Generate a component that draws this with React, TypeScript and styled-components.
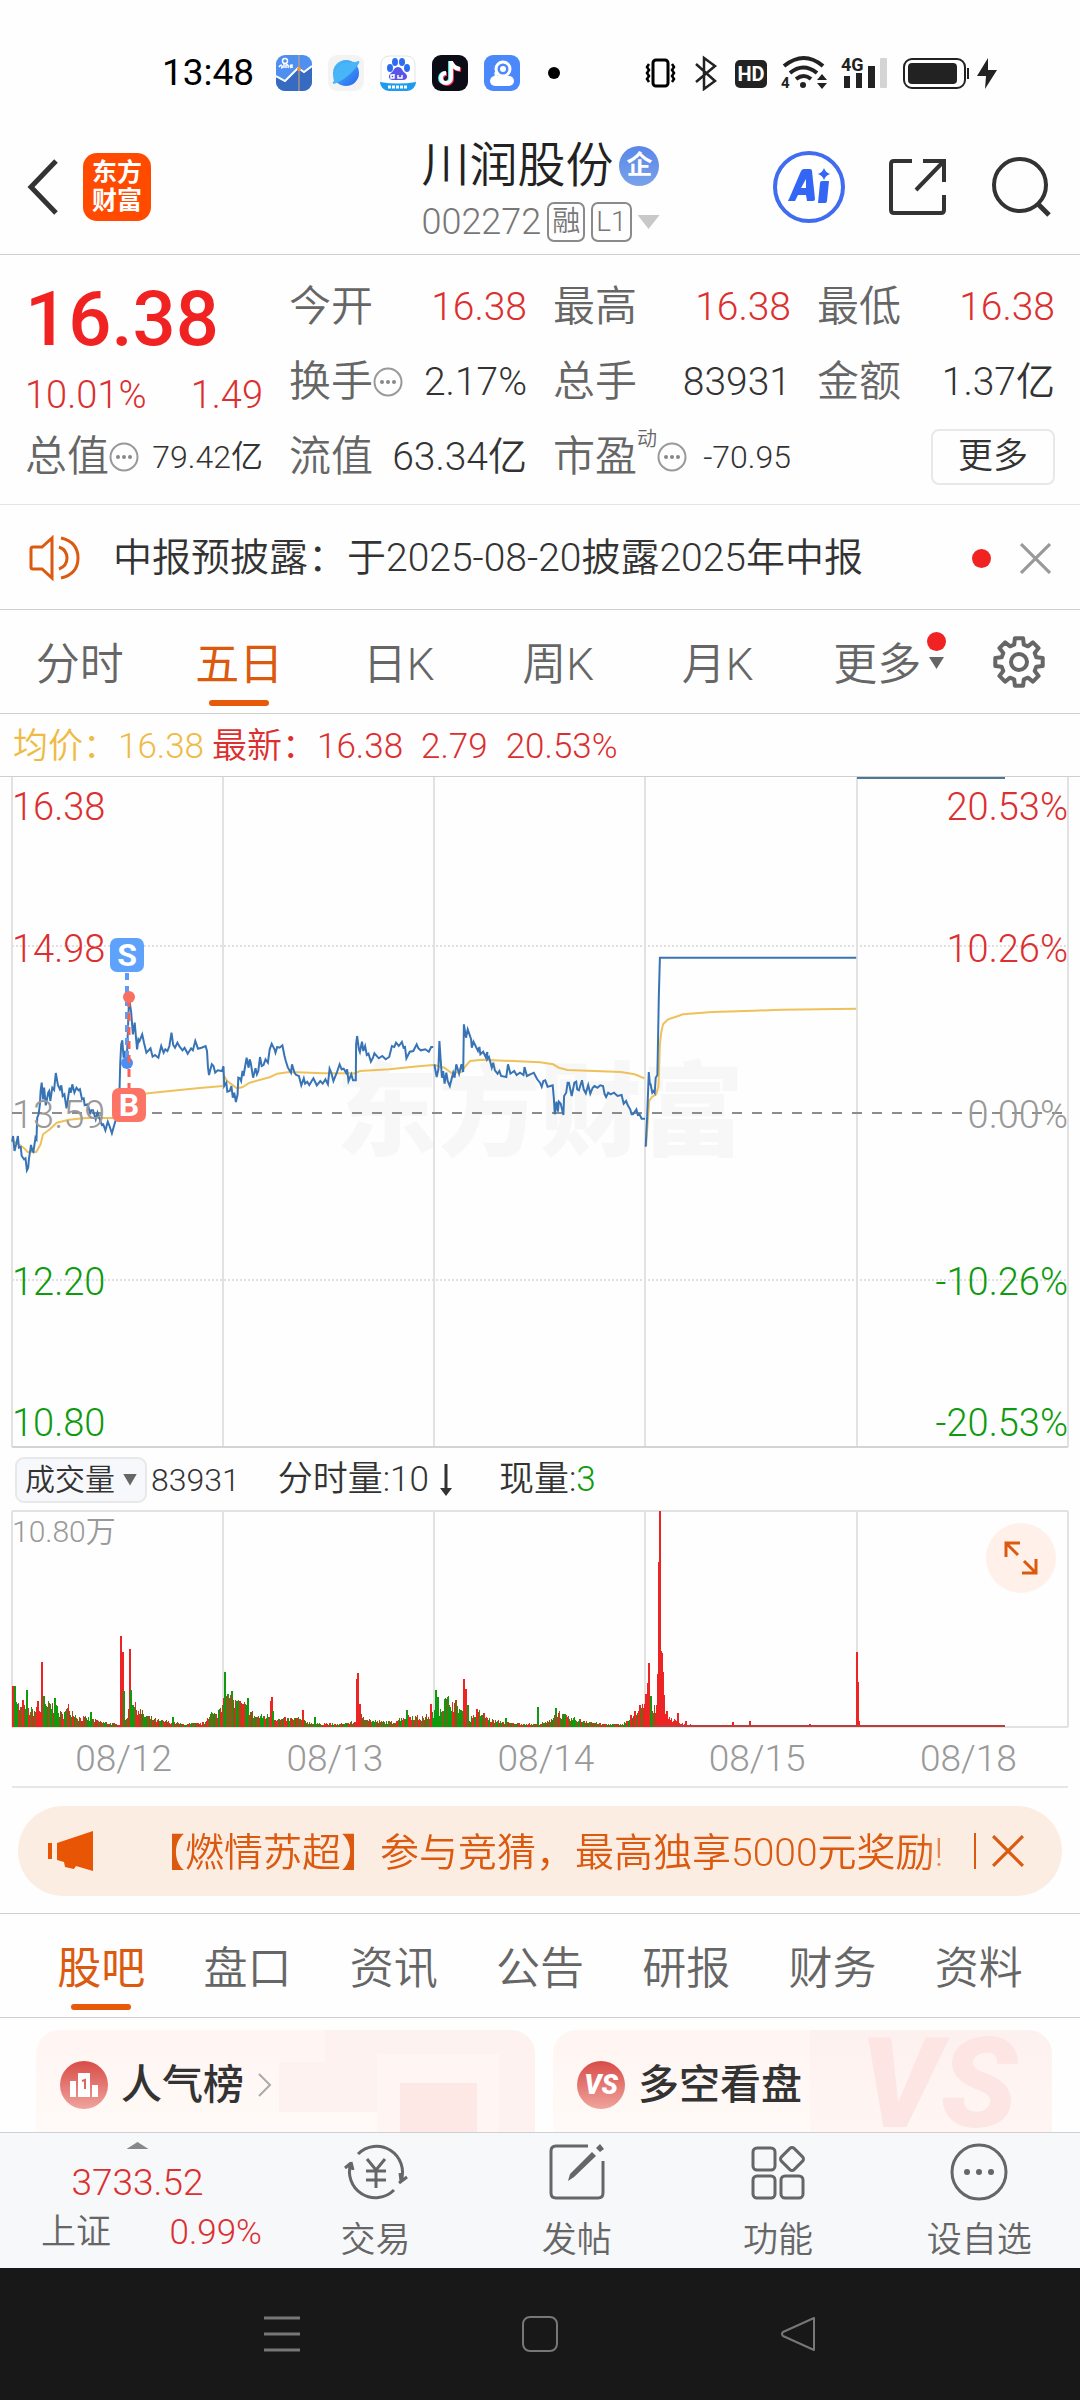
import React from "react";
import styled, { createGlobalStyle, css } from "styled-components";

const RED = "#dc2f2f";
const GREEN = "#0f9a0f";
const ORANGE = "#dc5a10";
const DARK = "#333333";
const GREY = "#666666";
const LIGHT = "#999999";
const LINE = "#cfcfcf";

const GlobalStyle = createGlobalStyle`
  * { box-sizing: border-box; }
  body {
    margin: 0;
    background: #fefefe;
    color: ${DARK};
    font-family: Roboto, "Noto Sans CJK SC", sans-serif;
    font-weight: 350;
    -webkit-font-smoothing: antialiased;
  }
  button, select {
    font-family: inherit;
    font-weight: inherit;
    color: inherit;
    background: none;
    border: 0;
    margin: 0;
    padding: 0;
    cursor: pointer;
  }
  svg { display: block; flex: none; }
`;

const Screen = styled.div`
  display: flex;
  flex-direction: column;
  height: 100vh;
  min-height: 2400px;
  overflow: hidden;
`;

/* ---------- status bar ---------- */

const StatusBar = styled.div`
  display: flex;
  align-items: center;
  justify-content: space-between;
  height: 118px;
  padding: 28px 82px 0 162px;
`;

const StatusGroup = styled.div<{ $gap: number }>`
  display: flex;
  align-items: center;
  gap: ${(p) => p.$gap}px;
`;

const Clock = styled.time`
  font-size: 37px;
  line-height: 44px;
  font-weight: 450;
  color: #000;
  margin-right: 6px;
`;

/* ---------- header ---------- */

const Header = styled.header`
  display: flex;
  align-items: center;
  justify-content: space-between;
  height: 137px;
  padding: 2px 29px 0 26px;
  border-bottom: 1px solid ${LINE};
`;

const HeaderSide = styled.div<{ $gap: number; $end?: boolean }>`
  display: flex;
  flex: 1;
  align-items: center;
  gap: ${(p) => p.$gap}px;
  justify-content: ${(p) => (p.$end ? "flex-end" : "flex-start")};
`;

const BrandLogo = styled.a`
  display: grid;
  place-content: center;
  width: 68px;
  height: 68px;
  border-radius: 14px;
  background: #ff4a00;
  color: #fff;
  font-size: 25px;
  line-height: 28px;
  font-weight: 700;
  text-align: center;
  text-decoration: none;
`;

const TitleBlock = styled.div`
  display: flex;
  flex-direction: column;
  padding: 6px 0 0 4px;
`;

const TitleRow = styled.div<{ $gap: number }>`
  display: flex;
  align-items: center;
  gap: ${(p) => p.$gap}px;
`;

const StockName = styled.h1`
  margin: 0;
  font-size: 48px;
  line-height: 64px;
  font-weight: 350;
  color: #222;
`;

const CompanyBadge = styled.span`
  width: 40px;
  height: 40px;
  border-radius: 50%;
  background: linear-gradient(#5a86e8, #79a2ea);
  color: #fff;
  font-size: 26px;
  line-height: 38px;
  font-weight: 700;
  text-align: center;
`;

const StockCode = styled.span`
  font-size: 36px;
  line-height: 48px;
  color: #777;
`;

const Tag = styled.span`
  min-width: 34px;
  height: 40px;
  padding: 0 3px;
  border: 2px solid #8a8a8a;
  border-radius: 7px;
  color: #777;
  font-size: 28px;
  line-height: 36px;
  text-align: center;
`;

const Triangle = styled.span<{ $w: number; $h: number; $color: string; $up?: boolean }>`
  flex: none;
  width: ${(p) => p.$w}px;
  height: ${(p) => p.$h}px;
  background: ${(p) => p.$color};
  clip-path: ${(p) => (p.$up ? "polygon(50% 0, 100% 100%, 0 100%)" : "polygon(0 0, 100% 0, 50% 100%)")};
`;

/* ---------- quote ---------- */

const Quote = styled.section`
  display: grid;
  grid-template-columns: repeat(4, minmax(0, 1fr));
  grid-template-rows: repeat(3, 75px);
  column-gap: 26px;
  height: 250px;
  padding: 14px 25px 0;
  border-bottom: 1px solid #e4e4e4;
`;

const PriceCell = styled.div`
  grid-row: span 2;
  display: flex;
  flex-direction: column;
  justify-content: space-between;
  padding: 6px 0 2px;
`;

const BigPrice = styled.strong`
  font-size: 76px;
  line-height: 88px;
  font-weight: 500;
  color: #f02222;
`;

const ChangeRow = styled.div`
  display: flex;
  justify-content: space-between;
  font-size: 38px;
  line-height: 44px;
  color: ${RED};
`;

const Stat = styled.div`
  display: flex;
  align-items: center;
  justify-content: space-between;
  white-space: nowrap;
`;

const StatLabel = styled.span`
  display: flex;
  align-items: center;
  font-size: 42px;
  line-height: 60px;
  color: ${GREY};
`;

const Super = styled.sup`
  align-self: flex-start;
  font-size: 20px;
  line-height: 24px;
`;

const StatValue = styled.span<{ $color?: string; $small?: boolean }>`
  font-size: ${(p) => (p.$small ? 32 : 39)}px;
  line-height: 60px;
  color: ${(p) => p.$color || DARK};
`;

const MoreButton = styled.button`
  align-self: center;
  justify-self: end;
  width: 124px;
  height: 56px;
  border: 2px solid #e6e9ea;
  border-radius: 8px;
  font-size: 35px;
  line-height: 48px;
`;

/* ---------- notice ---------- */

const Notice = styled.section`
  display: flex;
  align-items: center;
  height: 105px;
  padding: 2px 29px 0;
  border-bottom: 1px solid ${LINE};
`;

const NoticeText = styled.a`
  flex: 1;
  margin-left: 33px;
  font-size: 39px;
  line-height: 56px;
  color: ${DARK};
  text-decoration: none;
  white-space: nowrap;
`;

const Dot = styled.i`
  width: 19px;
  height: 19px;
  border-radius: 50%;
  background: #f02222;
`;

const IconButton = styled.button<{ $left?: number }>`
  display: grid;
  place-items: center;
  margin-left: ${(p) => p.$left || 0}px;
`;

/* ---------- tabs ---------- */

const TabBar = styled.nav<{ $pad: number }>`
  display: flex;
  height: 104px;
  padding: 0 ${(p) => p.$pad}px;
  border-bottom: 1px solid ${LINE};
`;

const Tab = styled.button<{ $active?: boolean }>`
  position: relative;
  flex: 1;
  padding-top: 6px;
  font-size: 44px;
  line-height: 60px;
  color: ${(p) => (p.$active ? ORANGE : GREY)};
  font-weight: ${(p) => (p.$active ? 400 : 350)};
  ${(p) =>
    p.$active &&
    css`
      &::after {
        content: "";
        position: absolute;
        bottom: 7px;
        left: calc(50% - 30px);
        width: 60px;
        height: 6px;
        border-radius: 3px;
        background: #e65a0a;
      }
    `}
`;

const TabDot = styled(Dot)`
  position: absolute;
  top: 22px;
  right: 11px;
`;

const TabTriangle = styled(Triangle)`
  position: absolute;
  top: 47px;
  right: 13px;
`;

const Settings = styled.button`
  display: grid;
  place-items: center;
  width: 123px;
`;

/* ---------- charts ---------- */

const Legend = styled.div`
  display: flex;
  align-items: center;
  height: 63px;
  padding: 4px 13px 0;
  gap: 18px;
  font-size: 35px;
  line-height: 48px;
  color: ${RED};
  border-bottom: 1px solid ${LINE};
`;

const LegendPair = styled.span<{ $color?: string }>`
  color: ${(p) => p.$color || "inherit"};
  & + & { margin-left: -10px; }
`;

const ChartBox = styled.section<{ $h: number }>`
  position: relative;
  height: ${(p) => p.$h}px;
  margin: 0 12px;
  & > svg { position: relative; width: 100%; height: 100%; overflow: visible; }
`;

const Watermark = styled.span`
  position: absolute;
  inset: 0;
  display: grid;
  place-items: center;
  font-size: 102px;
  line-height: 104px;
  font-weight: 900;
  color: #f7f7f7;
`;

const AxisLabel = styled.span<{ $top: number; $color: string; $right?: boolean; $small?: boolean }>`
  position: absolute;
  top: ${(p) => p.$top}px;
  ${(p) => (p.$right ? "right: 0;" : "left: 0;")}
  font-size: ${(p) => (p.$small ? 30 : 38)}px;
  line-height: 44px;
  color: ${(p) => p.$color};
`;

const TradeMark = styled.b<{ $top: number; $left: number; $bg: string }>`
  position: absolute;
  top: ${(p) => p.$top}px;
  left: ${(p) => p.$left}px;
  width: 34px;
  height: 34px;
  border-radius: 7px;
  background: ${(p) => p.$bg};
  color: #fff;
  font-size: 32px;
  line-height: 34px;
  font-weight: 700;
  text-align: center;
`;

const VolumeHeader = styled.div`
  display: flex;
  align-items: center;
  height: 63px;
  padding: 0 15px;
  font-size: 35px;
  line-height: 48px;
`;

const Picker = styled.label`
  display: flex;
  align-items: center;
  justify-content: space-between;
  width: 132px;
  height: 46px;
  padding: 0 8px;
  margin-right: 4px;
  border: 2px solid #e8e8ea;
  border-radius: 9px;
  background: #f7f8fb;
  select {
    appearance: none;
    font-size: 30px;
    line-height: 40px;
  }
`;

const VolumeTotal = styled.span`
  font-size: 32px;
  margin-right: 38px;
`;

const VolumeItem = styled.span`
  display: flex;
  align-items: center;
  gap: 10px;
  margin-right: 46px;
`;

const Up = styled.span`
  color: ${GREEN};
`;

const ExpandButton = styled.button`
  position: absolute;
  top: 12px;
  right: 12px;
  display: grid;
  place-items: center;
  width: 70px;
  height: 70px;
  border-radius: 50%;
  background: #fff1e9;
`;

const Dates = styled.div`
  display: grid;
  grid-template-columns: repeat(5, 1fr);
  height: 61px;
  margin: 0 12px;
  border-bottom: 2px solid #e6e6e6;
  font-size: 37px;
  line-height: 64px;
  color: ${LIGHT};
  text-align: center;
  span { padding-left: 12px; }
`;

/* ---------- promo banner ---------- */

const PromoWrap = styled.div`
  padding: 18px 18px 17px;
  border-bottom: 1px solid ${LINE};
`;

const Promo = styled.section`
  display: flex;
  align-items: center;
  height: 90px;
  padding: 0 38px 0 30px;
  border-radius: 45px;
  background: #fcede3;
`;

const PromoText = styled.a`
  flex: 1;
  min-width: 0;
  margin-left: 52px;
  padding-top: 4px;
  font-size: 39px;
  line-height: 56px;
  color: ${ORANGE};
  text-decoration: none;
  white-space: nowrap;
  mask-image: linear-gradient(90deg, #000 94%, transparent 100%);
`;

const PromoRule = styled.i`
  width: 2px;
  height: 36px;
  background: ${ORANGE};
`;

/* ---------- cards ---------- */

const Cards = styled.section`
  display: grid;
  grid-template-columns: repeat(2, minmax(0, 1fr));
  gap: 18px;
  flex: 1;
  min-height: 0;
  padding: 12px 28px 0 36px;
`;

const Card = styled.article`
  position: relative;
  display: flex;
  align-items: center;
  gap: 13px;
  padding: 7px 24px 0;
  overflow: hidden;
  border-radius: 24px 24px 0 0;
  background: linear-gradient(#fff5f3, #fffaf7);
  h2 {
    position: relative;
    margin: 0;
    font-size: 41px;
    line-height: 60px;
    font-weight: 500;
  }
  & > svg { position: relative; }
`;

const CardArt = styled.div`
  position: absolute;
  inset: 0 0 0 auto;
`;

const GhostVs = styled.span`
  position: absolute;
  top: 0;
  right: 0;
  width: 242px;
  height: 100%;
  padding: 8px 0 0 50px;
  background: linear-gradient(#fdf1ef, #fff6f3);
  color: #fce5e2;
  font-size: 126px;
  line-height: 92px;
  font-style: italic;
  font-weight: 900;
`;

const VsBadge = styled.span`
  width: 48px;
  height: 48px;
  border-radius: 50%;
  background: linear-gradient(#d84c47, #f0a39d);
  color: #fff;
  font-size: 27px;
  line-height: 48px;
  font-style: italic;
  font-weight: 900;
  text-align: center;
`;

/* ---------- bottom bars ---------- */

const BottomBar = styled.nav`
  display: grid;
  grid-template-columns: 275px repeat(4, 1fr);
  height: 136px;
  border-top: 1px solid #cdd0d5;
  background: #f7f8fa;
`;

const IndexCell = styled.a`
  display: flex;
  flex-direction: column;
  align-items: center;
  padding-top: 9px;
  color: ${RED};
  text-decoration: none;
  font-size: 37px;
  line-height: 48px;
`;

const IndexValue = styled.span`
  margin-top: 10px;
`;

const IndexRow = styled.div`
  display: flex;
  align-self: stretch;
  justify-content: space-between;
  padding: 0 13px 0 41px;
  font-size: 35px;
  line-height: 52px;
  span:first-child { color: ${GREY}; }
`;

const Action = styled.button`
  display: flex;
  flex-direction: column;
  align-items: center;
  padding-top: 10px;
  gap: 16px;
  font-size: 35px;
  line-height: 48px;
  color: ${GREY};
`;

const SystemNav = styled.nav`
  display: grid;
  grid-template-columns: repeat(3, 258px);
  justify-content: center;
  height: 132px;
  background: #181818;
`;

/* ---------- chart data ---------- */

type Pt = [number, number];

const PX = 0.34439;
const PY = 0.33333;
const price = (v: Pt[]) =>
  v.map(([x, y]) => `${(x * PX - 12).toFixed(1)},${(y * PY - 6).toFixed(1)}`).join(" ");
const shift = (v: Pt[]): Pt[] => v.map(([x, y]) => [x + 1568, y]);

const PRICE_DAYS: Pt[][] = [
  [[35,1112],[38,1095],[42,1140],[47,1120],[52,1095],[55,1130],[60,1128],[63,1155],[70,1165],[74,1162],[78,1198],[82,1190],[84,1165],[90,1122],[94,1140],[97,1143],[103,1100],[106,1105],[108,1040],[112,1030],[116,1000],[118,960],[121,935],[125,985],[128,950],[133,1003],[140,965],[143,960],[146,990],[152,950],[157,957],[162,906],[168,942],[174,955],[178,943],[182,975],[187,970],[193,1012],[202,950],[206,965],[210,940],[216,965],[222,950],[228,958],[232,955],[238,985],[243,982],[246,1003],[255,1000],[262,1030],[265,1018],[270,1018],[278,1045],[283,1025],[288,1040],[296,1062],[300,1060],[306,1078],[313,1052],[318,1065],[325,1087],[335,1050],[345,1040],[349,880],[352,820],[355,808],[359,860],[363,840],[368,880],[372,760],[375,680],[381,725],[386,790],[391,755],[395,800],[398,835],[402,805],[405,810],[413,790],[418,815],[425,845],[437,832],[443,857],[450,852],[460,860],[468,825],[475,845],[480,835],[486,840],[492,825],[498,785],[503,822],[508,830],[515,815],[522,828],[530,838],[536,830],[545,848],[555,832],[560,838],[567,810],[575,833],[585,830],[597,825],[601,840],[604,890],[607,912],[615,880],[620,885],[625,905],[632,898],[645,900],[649,885]],
  [[649,888],[651,945],[657,935],[660,962],[667,960],[672,945],[676,980],[680,965],[685,993],[690,970],[692,920],[697,922],[700,930],[704,900],[707,915],[712,885],[716,860],[722,890],[725,865],[728,875],[735,920],[742,892],[746,910],[750,900],[755,858],[760,885],[765,882],[771,865],[778,875],[783,835],[789,818],[797,835],[800,845],[805,828],[812,830],[820,823],[826,855],[830,870],[836,890],[845,905],[848,880],[855,905],[860,912],[868,915],[875,943],[882,922],[886,938],[892,932],[898,942],[905,930],[910,922],[920,943],[930,930],[937,938],[945,925],[952,940],[957,893],[962,905],[968,930],[978,905],[986,880],[992,895],[998,893],[1005,905],[1008,895],[1012,930],[1020,910],[1025,928],[1033,928],[1034,820],[1037,795],[1042,835],[1045,843],[1051,812],[1055,840],[1060,825],[1065,852],[1070,848],[1077,872],[1083,860],[1087,847],[1100,862],[1110,855],[1120,865],[1130,858],[1138,825],[1145,828],[1150,815],[1158,825],[1167,813],[1172,830],[1176,828],[1180,862],[1190,842],[1200,840],[1210,820],[1215,832],[1222,838],[1235,835],[1245,842],[1252,828],[1258,828]],
  shift([[-307,880],[-300,918],[-295,895],[-292,810],[-285,920],[-281,900],[-277,938],[-272,905],[-268,930],[-262,945],[-252,905],[-248,920],[-243,880],[-235,908],[-228,880],[-223,903],[-221,760],[-215,800],[-210,775],[-200,805],[-198,830],[-193,812],[-180,840],[-176,828],[-173,850],[-165,842],[-158,858],[-153,843],[-153,865],[-148,858],[-140,890],[-136,875],[-131,898],[-123,908],[-118,900],[-113,915],[-98,918],[-93,880],[-86,908],[-75,900],[-68,912],[-58,905],[-48,912],[-45,888],[-38,915],[-18,905],[-8,925],[0,935],[5,947],[10,930],[15,928],[22,947],[30,945],[37,943],[40,980],[43,1030],[48,992],[52,1022],[55,992],[60,998],[68,1032],[70,975],[76,965],[80,935],[84,935],[92,975],[100,935],[105,932],[108,955],[113,958],[122,928],[127,955],[133,967],[140,942],[146,968],[153,950],[158,945],[167,950],[175,943],[183,945],[188,970],[192,978],[198,965],[205,970],[215,965],[225,975],[237,972],[243,998],[250,990],[255,1003],[262,1015],[266,1030],[270,1030],[280,1015],[284,1032],[289,1030],[295,1043],[305,1043]]),
  shift([[307,1127],[309,1080],[311,1040],[316,903],[319,940],[321,940],[326,965],[330,960],[333,965],[336,920],[341,912],[345,680],[348,560],[918,560]]),
];

const AVERAGE_DAYS: Pt[][] = [
  [[36,1110],[55,1120],[70,1132],[80,1143],[105,1143],[118,1120],[125,1090],[145,1075],[165,1055],[200,1046],[250,1041],[330,1041],[352,1030],[370,990],[400,972],[430,967],[500,959],[580,951],[648,945]],
  [[651,915],[660,930],[688,952],[705,948],[725,935],[785,918],[805,908],[840,903],[940,907],[1030,907],[1045,900],[1130,895],[1200,887],[1258,882]],
  shift([[-307,882],[-278,890],[-258,905],[-228,903],[-216,885],[-203,870],[-168,866],[0,874],[38,880],[55,890],[80,897],[235,903],[275,910],[303,922]]),
  shift([[308,1125],[311,1080],[317,990],[325,978],[337,970],[344,945],[348,820],[352,785],[357,760],[372,745],[395,737],[415,730],[500,723],[620,719],[700,716],[918,713]]),
];

/* volume profile: base height per position, then single-minute spikes */
const VOLUME_BASE: Pt[] = [
  [0,28],[8,20],[18,17],[30,18],[38,24],[50,12],[56,20],[66,10],[80,8],[90,5],[102,3],[112,3],[118,24],[125,20],[132,12],[144,7],[160,5],[172,3],[192,4],[197,15],[204,12],[211,29],[220,26],[232,22],[243,11],[258,12],[266,8],[285,9],[300,4],[325,3],[342,5],[349,13],[360,6],[380,5],[395,12],[410,9],[425,16],[434,28],[446,22],[456,6],[464,16],[470,14],[478,7],[500,4],[525,3],[536,5],[544,16],[555,9],[570,7],[590,3],[610,3],[620,10],[630,20],[637,28],[641,20],[645,26],[650,38],[654,12],[665,5],[680,2],[700,1],[889,1],
];
const VOLUME_SPIKES: [number, number, string][] = [
  [0,41,"r"],[2,41,"g"],[14,37,"g"],[10,27,"r"],[25,26,"r"],[29,65,"r"],[31,31,"g"],[42,29,"g"],[44,21,"g"],[52,15,"g"],[60,11,"r"],[78,15,"g"],[108,91,"r"],[110,75,"r"],[111,36,"g"],[117,78,"r"],[118,37,"g"],[120,22,"g"],[160,10,"g"],
  [211,29,"r"],[212,55,"g"],[215,33,"g"],[219,36,"g"],[224,26,"g"],[227,26,"r"],[235,29,"g"],[258,26,"r"],[259,30,"r"],[260,16,"g"],[290,17,"r"],[302,10,"g"],[344,48,"r"],[345,54,"r"],[347,23,"r"],[394,17,"g"],[418,23,"r"],
  [423,37,"g"],[425,30,"g"],[432,28,"g"],[437,20,"g"],[451,48,"r"],[453,38,"r"],[455,22,"g"],[493,9,"g"],[525,20,"g"],[543,19,"g"],[552,13,"g"],[618,12,"r"],[622,16,"r"],[627,22,"r"],[633,33,"r"],[635,44,"r"],[636,64,"r"],[638,31,"g"],[645,53,"r"],[646,165,"r"],[647,216,"r"],[648,76,"r"],[649,74,"r"],[650,55,"r"],[651,32,"r"],[654,16,"r"],[665,14,"r"],[673,6,"r"],[720,5,"r"],[737,6,"r"],[797,3,"r"],[844,75,"r"],[845,45,"r"],[846,6,"r"],
];
const VOLUME_COLORS: Record<string, string> = { r: "#ee2424", g: GREEN, m: "#8a5414" };

const volumeBars = (() => {
  const bars: { x: number; h: number; c: string }[] = [];
  let seed = 7;
  const rand = () => {
    seed = (seed * 16807) % 2147483647;
    return seed / 2147483647;
  };
  let i = 0;
  for (let x = 0; x < 844; x += 1) {
    while (i < VOLUME_BASE.length - 2 && VOLUME_BASE[i + 1][0] <= x) i += 1;
    const [x0, h0] = VOLUME_BASE[i];
    const [x1, h1] = VOLUME_BASE[i + 1];
    const base = h0 + ((h1 - h0) * (x - x0)) / (x1 - x0);
    const h = Math.max(2, Math.round(base * (0.6 + rand() * 0.6)));
    const pick = rand();
    const c = x > 642 ? "r" : pick < 0.34 ? "r" : pick < 0.68 ? "g" : "m";
    bars.push({ x, h, c });
  }
  VOLUME_SPIKES.forEach(([x, h, c]) => bars.push({ x, h, c }));
  return bars;
})();

const GridLines = ({ height }: { height: number }) => (
  <g stroke="#e2e2e2" strokeWidth="2" fill="none">
    {[0, 211, 422, 633, 845, 1056].map((x) => (
      <path key={x} d={`M${x} 0V${height}`} />
    ))}
  </g>
);

/* ---------- small icons ---------- */

const MoreCircle = () => (
  <svg width="30" height="30" viewBox="0 0 30 30" aria-hidden="true">
    <circle cx="15" cy="15" r="13.5" fill="none" stroke="#999" strokeWidth="2" />
    {[9, 15, 21].map((x) => (
      <circle key={x} cx={x} cy="15" r="2" fill="#888" />
    ))}
  </svg>
);

const Cross = ({ size, color, width }: { size: number; color: string; width: number }) => (
  <svg width={size} height={size} viewBox="0 0 30 30" fill="none" stroke={color} strokeWidth={width}>
    <path d="M1 1 29 29M29 1 1 29" />
  </svg>
);

const AppIcons = () => (
  <>
    <svg width="36" height="36" viewBox="0 0 36 36">
      <rect width="36" height="36" rx="9" fill="#4e8ff0" />
      <path d="M0 22 9 27 22 14 28 18 36 12V27a9 9 0 0 1-9 9H9a9 9 0 0 1-9-9Z" fill="#376bc2" />
      <path d="M0 21 9 26 22 13 28 17 36 11" fill="none" stroke="#fff" strokeWidth="2" />
      <path d="M23 0V36" stroke="#d5a868" strokeWidth="1" />
      <circle cx="23" cy="14" r="2" fill="#f39a1f" />
      <path d="M3 12q2-3 3-1t-1 2M8 9v4M10 13v-3q3-1 2 3M15 13q-2-3 1-3v3" fill="none" stroke="#fff" strokeWidth="1.5" />
      <circle cx="9" cy="6" r="2.5" fill="none" stroke="#fff" strokeWidth="1.5" />
    </svg>
    <svg width="36" height="36" viewBox="0 0 36 36">
      <defs>
        <linearGradient id="planet" x1="0" y1="0" x2="1" y2="1">
          <stop offset="0" stopColor="#4cc4fb" />
          <stop offset="1" stopColor="#2a62ee" />
        </linearGradient>
      </defs>
      <rect width="36" height="36" rx="9" fill="#f3f3f3" />
      <circle cx="18" cy="18" r="13" fill="url(#planet)" />
      <path d="M5 27C3 32 15 26 24 17S33 4 28 7Q14 5 8 14 4 20 6 26" fill="#48b5f8" />
    </svg>
    <svg width="36" height="36" viewBox="0 0 36 36">
      <rect x="1" y="1" width="34" height="34" rx="8" fill="#fff" stroke="#e4e4e4" />
      <g fill="#2c6cf0">
        <ellipse cx="10" cy="13" rx="3" ry="4" />
        <ellipse cx="15" cy="7" rx="3" ry="4" />
        <ellipse cx="22" cy="7" rx="3" ry="4" />
        <ellipse cx="27" cy="13" rx="3" ry="4" />
      </g>
      <path d="M18 12c4 0 4 4 7 6s3 7-2 7H13c-5 0-5-5-2-7s3-6 7-6" fill="#5b54e8" />
      <path d="M14 19v4h-3v-3h3M18 20v3h4v-3" fill="none" stroke="#fff" strokeWidth="1.5" />
      <path d="M0 27q18 3 36 0a9 9 0 0 1-9 9H9a9 9 0 0 1-9-9" fill="#1d9bf0" />
      <path d="M8 32h20" stroke="#fff" strokeWidth="3" strokeDasharray="3 1" />
    </svg>
    <svg width="36" height="36" viewBox="0 0 36 36">
      <rect width="36" height="36" rx="9" fill="#0c0c16" />
      <g fill="none" strokeWidth="4">
        <path d="M18 6v17a5 5 0 1 1-5-5M18 7q2 6 9 7" stroke="#25f4ee" />
        <path d="M20 7v17a5 5 0 1 1-5-5M20 8q2 6 9 7" stroke="#fe2c55" />
        <path d="M19 6v17a5 5 0 1 1-5-5M19 7q2 6 9 7" stroke="#fff" />
      </g>
    </svg>
    <svg width="36" height="36" viewBox="0 0 36 36">
      <rect width="36" height="36" rx="9" fill="#4a88fb" />
      <rect x="6" y="21" width="24" height="10" rx="5" fill="#fff" />
      <circle cx="19" cy="14" r="7" fill="#4a88fb" stroke="#fff" strokeWidth="3" />
      <circle cx="19" cy="14" r="3" fill="#fff" />
      <path d="M12 17v6h12" fill="none" stroke="#fff" strokeWidth="3" />
    </svg>
  </>
);

const SystemIcons = () => (
  <svg width="353" height="36" viewBox="645 54 353 36" role="img" aria-label="系统状态">
    <rect x="653" y="59" width="15" height="26" rx="3" fill="none" stroke="#000" strokeWidth="3" />
    <path d="M649 63l-2 3 2 3-2 3 2 3-2 3 2 3M672 63l2 3-2 3 2 3-2 3 2 3-2 3" fill="none" stroke="#000" strokeWidth="2.5" />
    <path d="M696 63l19 17-11 8V57l11 8-19 16" fill="none" stroke="#222" strokeWidth="2.5" />
    <rect x="735" y="59" width="32" height="28" rx="5" fill="#222" />
    <text x="751" y="80" fill="#fff" fontSize="20" fontWeight="700" textAnchor="middle">HD</text>
    <g fill="none" stroke="#222" strokeWidth="4">
      <path d="M784 65q20-16 39 0" />
      <path d="M790 72q13-11 27 0" />
      <path d="M796 78q8-6 15 0" />
    </g>
    <circle cx="803" cy="84" r="3" fill="#222" />
    <text x="781" y="87" fill="#222" fontSize="15" fontWeight="700">4</text>
    <path d="M817 79l5-6 5 6zM817 82l5 6 5-6z" fill="#222" />
    <text x="841" y="70" fill="#222" fontSize="18" fontWeight="700">4G</text>
    <path d="M844 75h6v12h-6zM856 72h6v15h-6zM868 65h7v22h-7z" fill="#222" />
    <rect x="880" y="57" width="7" height="30" rx="1" fill="#d4d4d4" />
    <rect x="904" y="58" width="61" height="29" rx="8" fill="none" stroke="#222" strokeWidth="2" />
    <rect x="908" y="62" width="49" height="21" rx="4" fill="#222" />
    <path d="M968 67v11" stroke="#222" strokeWidth="2" />
    <path d="M988 57 977 75h9l-1 13 12-19h-9z" fill="#222" />
  </svg>
);

const gearPath = (() => {
  const pts: string[] = [];
  for (let k = 0; k < 8; k += 1) {
    const a = (k * Math.PI) / 4;
    [[-0.27, 18], [-0.17, 24], [0.17, 24], [0.27, 18]].forEach(([d, r]) => {
      pts.push(`${(26 + Math.sin(a + d) * r).toFixed(1)},${(26 - Math.cos(a + d) * r).toFixed(1)}`);
    });
  }
  return `M${pts.join("L")}Z`;
})();

/* ---------- page ---------- */

const DATES = ["08/12", "08/13", "08/14", "08/15", "08/18"];
const INFO_TABS = ["股吧", "盘口", "资讯", "公告", "研报", "财务", "资料"];
const AXIS: [number, string, string, string][] = [
  [8, "16.38", "20.53%", RED],
  [150, "14.98", "10.26%", RED],
  [316, "13.59", "0.00%", LIGHT],
  [483, "12.20", "-10.26%", GREEN],
  [624, "10.80", "-20.53%", GREEN],
];

export default function App() {
  return (
    <Screen>
      <GlobalStyle />

      <StatusBar>
        <StatusGroup $gap={16}>
          <Clock>13:48</Clock>
          <AppIcons />
          <svg width="36" height="12" viewBox="0 0 36 12">
            <circle cx="18" cy="6" r="6" />
          </svg>
        </StatusGroup>
        <SystemIcons />
      </StatusBar>

      <Header>
        <HeaderSide $gap={24}>
          <IconButton aria-label="返回">
            <svg width="33" height="56" viewBox="0 0 33 56" fill="none" stroke="#333" strokeWidth="5">
              <path d="M30 2 5 28 30 54" />
            </svg>
          </IconButton>
          <BrandLogo href="#home">
            <span>东方</span>
            <span>财富</span>
          </BrandLogo>
        </HeaderSide>
        <TitleBlock>
          <TitleRow $gap={6}>
            <StockName>川润股份</StockName>
            <CompanyBadge>企</CompanyBadge>
          </TitleRow>
          <TitleRow $gap={6}>
            <StockCode>002272</StockCode>
            <Tag>融</Tag>
            <Tag>L1</Tag>
            <Triangle $w={22} $h={14} $color="#c8c8c8" />
          </TitleRow>
        </TitleBlock>
        <HeaderSide $gap={43} $end>
          <IconButton aria-label="AI">
            <svg width="72" height="72" viewBox="0 0 72 72">
              <circle cx="36" cy="36" r="34" fill="#fff" stroke="#3f6cf0" strokeWidth="4" />
              <path
                d="M16 48 28 20q1-2 3-2h6q2 0 2 2l3 28q0 2-2 2h-6l-1-6h-8l-3 6h-6q-2 0 0-2ZM28 37h5V28Z"
                fill="#3466f6"
              />
              <path d="M47 32q0-2 2-2h7l-2 20q0 2-2 2h-7z" fill="#3466f6" />
              <path d="M51 17q1.500 4.500 6 6-4.500 1.500-6 6-1.500-4.500-6-6 4.500-1.500 6-6" fill="#3466f6" />
            </svg>
          </IconButton>
          <IconButton aria-label="分享">
            <svg width="60" height="60" viewBox="0 0 60 60" fill="none" stroke="#333" strokeWidth="4">
              <path d="M24 4H6q-3 0-3 3v46q0 3 3 3h47q3 0 3-3V38M35 4h21v21M56 4 28 33" />
            </svg>
          </IconButton>
          <IconButton aria-label="搜索">
            <svg width="60" height="60" viewBox="0 0 60 60" fill="none" stroke="#333" strokeWidth="4">
              <circle cx="29" cy="28" r="26" />
              <path d="M47 47 58 58" strokeWidth="5" />
            </svg>
          </IconButton>
        </HeaderSide>
      </Header>

      <Quote>
        <PriceCell>
          <BigPrice>16.38</BigPrice>
          <ChangeRow>
            <span>10.01%</span>
            <span>1.49</span>
          </ChangeRow>
        </PriceCell>
        <Stat>
          <StatLabel>今开</StatLabel>
          <StatValue $color={RED}>16.38</StatValue>
        </Stat>
        <Stat>
          <StatLabel>最高</StatLabel>
          <StatValue $color={RED}>16.38</StatValue>
        </Stat>
        <Stat>
          <StatLabel>最低</StatLabel>
          <StatValue $color={RED}>16.38</StatValue>
        </Stat>
        <Stat>
          <StatLabel>换手<MoreCircle /></StatLabel>
          <StatValue>2.17%</StatValue>
        </Stat>
        <Stat>
          <StatLabel>总手</StatLabel>
          <StatValue>83931</StatValue>
        </Stat>
        <Stat>
          <StatLabel>金额</StatLabel>
          <StatValue>1.37亿</StatValue>
        </Stat>
        <Stat>
          <StatLabel>总值<MoreCircle /></StatLabel>
          <StatValue $small>79.42亿</StatValue>
        </Stat>
        <Stat>
          <StatLabel>流值</StatLabel>
          <StatValue>63.34亿</StatValue>
        </Stat>
        <Stat>
          <StatLabel>市盈<Super>动</Super><MoreCircle /></StatLabel>
          <StatValue $small>-70.95</StatValue>
        </Stat>
        <MoreButton>更多</MoreButton>
      </Quote>

      <Notice>
        <svg width="51" height="46" viewBox="0 0 51 46" fill="none" stroke={ORANGE} strokeWidth="3">
          <path d="M23 3 13 12H4q-2 0-2 2v18q0 2 2 2h9l10 9z" />
          <path d="M30 12q8 3 8 11t-8 11M32 3q17 4 17 20T32 43" />
        </svg>
        <NoticeText href="#notice">中报预披露：于2025-08-20披露2025年中报</NoticeText>
        <Dot />
        <IconButton aria-label="关闭公告" $left={29}>
          <Cross size={31} color="#999" width={3} />
        </IconButton>
      </Notice>

      <TabBar $pad={0}>
        <Tab>分时</Tab>
        <Tab $active>五日</Tab>
        <Tab>日K</Tab>
        <Tab>周K</Tab>
        <Tab>月K</Tab>
        <Tab>
          更多
          <TabTriangle $w={15} $h={12} $color="#666" />
          <TabDot />
        </Tab>
        <Settings aria-label="设置">
          <svg width="52" height="52" viewBox="0 0 52 52" fill="none" stroke="#666" strokeWidth="4" strokeLinejoin="round">
            <path d={gearPath} />
            <circle cx="26" cy="26" r="8" />
          </svg>
        </Settings>
      </TabBar>

      <Legend>
        <LegendPair $color="#efbb45">均价：16.38</LegendPair>
        <LegendPair>最新：16.38</LegendPair>
        <span>2.79</span>
        <span>20.53%</span>
      </Legend>

      <ChartBox $h={671}>
        <Watermark aria-hidden="true">东方财富</Watermark>
        <svg viewBox="0 0 1056 671" preserveAspectRatio="none">
          <GridLines height={670} />
          <path d="M0 169H1056M0 503H1056" stroke="#e0e0e0" strokeWidth="2" strokeDasharray="2 2" />
          <path d="M0 670H1056" stroke="#d4d4d4" strokeWidth="2" />
          <path d="M0 336H1056" stroke="#8c8c8c" strokeWidth="2" strokeDasharray="10 10" />
          {AVERAGE_DAYS.map((d, k) => (
            <polyline key={k} points={price(d)} fill="none" stroke="#efc15a" strokeWidth="2" />
          ))}
          {PRICE_DAYS.map((d, k) => (
            <polyline key={k} points={price(d)} fill="none" stroke="#3874b5" strokeWidth="2" />
          ))}
          <path d="M845 1H993" stroke="#4a7896" strokeWidth="2" />
          <path d="M115 196V286" stroke="#5a9df8" strokeWidth="4" strokeDasharray="7 6" />
          <circle cx="115" cy="286" r="6" fill="#4a8ff5" />
          <path d="M117 222V311" stroke="#f8604f" strokeWidth="3" strokeDasharray="8 6" />
          <circle cx="117" cy="220" r="6" fill="#f8705f" />
        </svg>
        {AXIS.map(([top, left, right, color]) => (
          <React.Fragment key={left}>
            <AxisLabel $top={top} $color={color}>{left}</AxisLabel>
            <AxisLabel $top={top} $color={color} $right>{right}</AxisLabel>
          </React.Fragment>
        ))}
        <TradeMark $top={161} $left={98} $bg="#5ea2fc">S</TradeMark>
        <TradeMark $top={311} $left={100} $bg="#fb7466">B</TradeMark>
      </ChartBox>

      <VolumeHeader>
        <Picker>
          <select aria-label="指标" defaultValue="vol">
            <option value="vol">成交量</option>
          </select>
          <Triangle $w={14} $h={12} $color="#666" />
        </Picker>
        <VolumeTotal>83931</VolumeTotal>
        <VolumeItem>
          分时量:10
          <svg width="14" height="32" viewBox="0 0 14 32">
            <path d="M7 0V28" stroke="#333" strokeWidth="3" />
            <path d="M1 24h12L7 32z" fill="#333" />
          </svg>
        </VolumeItem>
        <span>现量:<Up>3</Up></span>
      </VolumeHeader>

      <ChartBox $h={216}>
        <svg viewBox="0 0 1056 216" preserveAspectRatio="none">
          <GridLines height={216} />
          <path d="M0 0H1056M0 216H1056" stroke="#e2e2e2" strokeWidth="2" />
          {volumeBars.map((b, k) => (
            <rect key={k} x={b.x} y={216 - b.h} width={k >= 844 ? 2 : 1} height={b.h} fill={VOLUME_COLORS[b.c]} />
          ))}
          <path d="M642 215H993" stroke="#b8403c" strokeWidth="2" />
        </svg>
        <AxisLabel $top={-1} $color={LIGHT} $small>10.80万</AxisLabel>
        <ExpandButton aria-label="全屏">
          <svg width="34" height="34" viewBox="0 0 34 34" fill="none" stroke={ORANGE} strokeWidth="3">
            <path d="M2 16V2H16M2 2 14 14M32 18V32H18M32 32 20 20" />
          </svg>
        </ExpandButton>
      </ChartBox>
      <Dates>
        {DATES.map((d) => (
          <span key={d}>{d}</span>
        ))}
      </Dates>

      <PromoWrap>
        <Promo>
          <svg width="46" height="40" viewBox="0 0 46 40" fill="#e85505">
            <path d="M0 12h4v16H0zM9 12 45 0V40L28 35 26 38 17 36 16 31 9 29z" />
          </svg>
          <PromoText href="#promo">【燃情苏超】参与竞猜，最高独享5000元奖励!</PromoText>
          <PromoRule />
          <IconButton aria-label="关闭活动" $left={16}>
            <Cross size={32} color={ORANGE} width={3} />
          </IconButton>
        </Promo>
      </PromoWrap>

      <TabBar $pad={28}>
        {INFO_TABS.map((t, k) => (
          <Tab key={t} $active={k === 0}>{t}</Tab>
        ))}
      </TabBar>

      <Cards>
        <Card>
          <CardArt>
            <svg width="256" height="102" viewBox="0 0 256 102">
              <path d="M0 32H46V0H256V102H98V82H0z" fill="#fdf2f0" />
              <path d="M98 102V24H220V102z" fill="#fff6f4" />
              <path d="M121 102V53H198V102z" fill="#fde8e6" />
            </svg>
          </CardArt>
          <svg width="48" height="48" viewBox="0 0 48 48">
            <defs>
              <linearGradient id="podium" x1="0" y1="0" x2="0" y2="1">
                <stop offset="0" stopColor="#d84c47" />
                <stop offset="1" stopColor="#f0a39d" />
              </linearGradient>
            </defs>
            <circle cx="24" cy="24" r="24" fill="url(#podium)" />
            <path d="M10 20h6v16h-6zM18 12h12v24H18zM32 24h6v12h-6z" fill="#fff" />
            <path d="M22 20l3-1v9" fill="none" stroke="#dc6661" strokeWidth="2" />
          </svg>
          <h2>人气榜</h2>
          <svg width="15" height="24" viewBox="0 0 15 24" fill="none" stroke="#aaa" strokeWidth="2">
            <path d="M2 1 13 12 2 23" />
          </svg>
        </Card>
        <Card>
          <GhostVs aria-hidden="true">VS</GhostVs>
          <VsBadge>VS</VsBadge>
          <h2>多空看盘</h2>
        </Card>
      </Cards>

      <BottomBar>
        <IndexCell href="#index">
          <Triangle $w={22} $h={7} $color="#888" $up />
          <IndexValue>3733.52</IndexValue>
          <IndexRow>
            <span>上证</span>
            <span>0.99%</span>
          </IndexRow>
        </IndexCell>
        <Action>
          <svg width="66" height="58" viewBox="0 0 66 58" fill="none" stroke="#666" strokeWidth="3">
            <path d="M15 11A26 26 0 0 1 58 38M58 38l-1-8M56 40l8-6" />
            <path d="M51 47A26 26 0 0 1 8 20M8 20l-6 5M8 19l2 8" />
            <path d="M24 16l9 11 9-11M33 27V45M23 28H43M23 37H43" />
          </svg>
          交易
        </Action>
        <Action>
          <svg width="58" height="58" viewBox="0 0 58 58" fill="none" stroke="#666" strokeWidth="3">
            <path d="M40 3H8Q3 3 3 8V50Q3 55 8 55H50Q55 55 55 50V18" />
            <path d="M20 38 22 31 44 9 48 13 26 34zM48 5 52 1 56 6 52 9z" fill="#666" stroke="none" />
          </svg>
          发帖
        </Action>
        <Action>
          <svg width="58" height="58" viewBox="0 0 58 58" fill="none" stroke="#666" strokeWidth="3">
            <rect x="4" y="5" width="22" height="22" rx="4" />
            <rect x="4" y="33" width="22" height="22" rx="4" />
            <rect x="32" y="33" width="22" height="22" rx="4" />
            <rect x="34" y="7" width="18" height="18" rx="3" transform="rotate(45 43 16)" />
          </svg>
          功能
        </Action>
        <Action>
          <svg width="58" height="58" viewBox="0 0 58 58">
            <circle cx="29" cy="29" r="27" fill="none" stroke="#666" strokeWidth="3" />
            {[17, 29, 41].map((x) => (
              <circle key={x} cx={x} cy="29" r="3" fill="#666" />
            ))}
          </svg>
          设自选
        </Action>
      </BottomBar>

      <SystemNav>
        <IconButton aria-label="最近任务">
          <svg width="36" height="38" viewBox="0 0 36 38" stroke="#777" strokeWidth="3">
            <path d="M0 3H36M0 19H36M0 35H36" />
          </svg>
        </IconButton>
        <IconButton aria-label="主屏幕">
          <svg width="38" height="38" viewBox="0 0 38 38" fill="none" stroke="#777" strokeWidth="2">
            <rect x="2" y="2" width="34" height="34" rx="7" />
          </svg>
        </IconButton>
        <IconButton aria-label="返回上一页">
          <svg width="36" height="38" viewBox="0 0 36 38" fill="none" stroke="#777" strokeWidth="2" strokeLinejoin="round">
            <path d="M34 3V35L3 21q-2-2 0-4z" />
          </svg>
        </IconButton>
      </SystemNav>
    </Screen>
  );
}
